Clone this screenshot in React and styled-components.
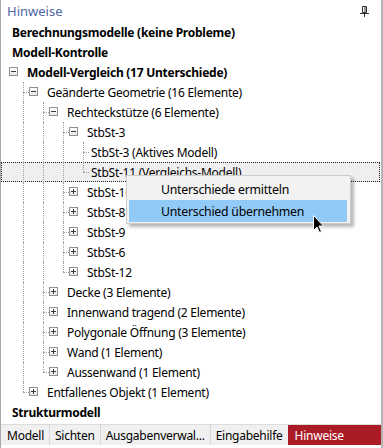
import styled, { createGlobalStyle } from "styled-components";

const GlobalStyle = createGlobalStyle`
    html, body {
        margin: 0;
        padding: 0;
        background: #ffffff;
    }
    body {
        font-family: "Noto Sans", "Open Sans", sans-serif;
        font-size: 12px;
        letter-spacing: -0.25px;
        color: #000;
    }
`;

const StyledPanel = styled.div`
    position: relative;
    width: 383px;
    height: 448px;
    box-sizing: border-box;
    border-left: 1px solid #a9a9a9;
    border-right: 2px solid #b4b4b4;
    background: #ffffff;
    display: flex;
    flex-direction: column;
    overflow: hidden;
`;

const StyledHeader = styled.div`
    height: 23px;
    display: flex;
    align-items: center;
    justify-content: space-between;
    padding: 0 12px 0 6px;
    font-size: 13px;
    letter-spacing: 0;
    color: #4e67a3;
`;

const StyledTree = styled.div`
    flex: 1;
    display: flex;
    flex-direction: column;
`;

const StyledRow = styled.div`
    position: relative;
    height: 20px;
    display: flex;
    align-items: center;
    box-sizing: border-box;
    padding-left: ${(p) => p.$textLeft}px;
    font-weight: ${(p) => (p.$bold ? 700 : 400)};
    background: ${(p) => (p.$selected ? "#efefef" : "transparent")};
    border: 1px dotted ${(p) => (p.$selected ? "#222" : "transparent")};
    margin-right: 1px;
    white-space: nowrap;
`;

const StyledGuide = styled.span`
    position: absolute;
    left: ${(p) => p.$x - 1}px;
    top: -1px;
    height: ${(p) => (p.$half ? "10px" : "20px")};
    border-left: 1px dotted #a0a0a0;
`;

const StyledStub = styled.span`
    position: absolute;
    left: ${(p) => p.$x - 1}px;
    top: 9px;
    width: 6px;
    border-top: 1px dotted #a0a0a0;
`;

const StyledBox = styled.span`
    position: absolute;
    left: ${(p) => p.$x - 1}px;
    top: 4px;
    width: 9px;
    height: 9px;
    box-sizing: border-box;
    border: 1px solid #919191;
    background: linear-gradient(#ffffff, #e9e9e9);

    &::before {
        content: "";
        position: absolute;
        left: 1px;
        top: 3px;
        width: 5px;
        height: 1px;
        background: #3a3a3a;
    }
    &::after {
        content: "";
        position: absolute;
        left: 3px;
        top: 1px;
        width: 1px;
        height: 5px;
        background: #3a3a3a;
        display: ${(p) => (p.$open ? "none" : "block")};
    }
`;

const StyledMenu = styled.div`
    position: absolute;
    left: 125px;
    top: 175px;
    width: 225px;
    box-sizing: border-box;
    padding: 2px 3px 1px 2px;
    background: #f2f2f2;
    border: 1px solid #cccccc;
    box-shadow: 3px 3px 3px rgba(0, 0, 0, 0.28);
    display: flex;
    flex-direction: column;
`;

const StyledMenuItem = styled.div`
    height: 22px;
    display: flex;
    align-items: center;
    padding-left: 32px;
    background: ${(p) => (p.$active ? "#91c9f7" : "transparent")};
    font-size: 12.3px;
`;

const StyledCursor = styled.svg`
    position: absolute;
    left: 312px;
    top: 215px;
`;

const StyledTabBar = styled.div`
    height: 20px;
    margin-top: 2px;
    margin-bottom: 3px;
    display: flex;
    align-items: stretch;
    background: #f0f0f0;
    border-top: 1px solid #dcdcdc;
`;

const StyledTab = styled.div`
    display: flex;
    align-items: center;
    padding: 0 ${(p) => (p.$active ? 6 : 5)}px;
    color: ${(p) => (p.$active ? "#ffffff" : "#000")};
    background: ${(p) => (p.$active ? "#aa1b25" : "transparent")};
    border-left: 1px solid ${(p) => (p.$first || p.$active ? "transparent" : "#d6d6d6")};
    flex: ${(p) => (p.$active ? 1 : "none")};
`;

const rows = [
    { level: 0, text: "Berechnungsmodelle (keine Probleme)", bold: true },
    { level: 0, text: "Modell-Kontrolle", bold: true },
    { level: 0, text: "Modell-Vergleich (17 Unterschiede)", bold: true, box: "open" },
    { level: 1, text: "Geänderte Geometrie (16 Elemente)", box: "open" },
    { level: 2, text: "Rechteckstütze (6 Elemente)", box: "open" },
    { level: 3, text: "StbSt-3", box: "open" },
    { level: 4, text: "StbSt-3 (Aktives Modell)" },
    { level: 4, text: "StbSt-11 (Vergleichs-Modell)", selected: true },
    { level: 3, text: "StbSt-10", box: "closed" },
    { level: 3, text: "StbSt-8", box: "closed" },
    { level: 3, text: "StbSt-9", box: "closed" },
    { level: 3, text: "StbSt-6", box: "closed" },
    { level: 3, text: "StbSt-12", box: "closed" },
    { level: 2, text: "Decke (3 Elemente)", box: "closed" },
    { level: 2, text: "Innenwand tragend (2 Elemente)", box: "closed" },
    { level: 2, text: "Polygonale Öffnung (3 Elemente)", box: "closed" },
    { level: 2, text: "Wand (1 Element)", box: "closed" },
    { level: 2, text: "Aussenwand (1 Element)", box: "closed" },
    { level: 1, text: "Entfallenes Objekt (1 Element)", box: "closed" },
    { level: 0, text: "Strukturmodell", bold: true },
];

// gibt es weiter unten noch einen Knoten auf dieser Ebene (vor einem Elternwechsel)?
const hasNextAt = (i, level) => {
    for (let j = i + 1; j < rows.length; j++) {
        if (rows[j].level < level) return false;
        if (rows[j].level === level) return true;
    }
    return false;
};

const tabs = ["Modell", "Sichten", "Ausgabenverwal...", "Eingabehilfe", "Hinweise"];

const TreeRow = ({ row, index }) => {
    const { level, box } = row;
    let textLeft = 10;
    if (level === 0 && box) textLeft = 25;
    if (level > 0) textLeft = box ? 25 + 20 * level : 9 + 20 * level;

    const guides = [];
    for (let k = 1; k < level; k++) {
        if (hasNextAt(index, k)) guides.push(<StyledGuide key={k} $x={2 + 20 * k} />);
    }

    return (
        <StyledRow $textLeft={textLeft} $bold={row.bold} $selected={row.selected}>
            {guides}
            {level > 0 && (
                <>
                    <StyledGuide $x={2 + 20 * level} $half={!hasNextAt(index, level)} />
                    <StyledStub $x={2 + 20 * level} />
                </>
            )}
            {box && <StyledBox $x={8 + 20 * level} $open={box === "open"} />}
            {row.text}
        </StyledRow>
    );
};

const App = () => {
    return (
        <>
            <GlobalStyle />
            <StyledPanel>
                <StyledHeader>
                    <span>Hinweise</span>
                    <svg width="9" height="11" viewBox="0 0 9 11">
                        <path d="M2.5 0.5h4v6h-4z" fill="none" stroke="#333" />
                        <path d="M5 1v5.5" stroke="#333" />
                        <path d="M0 7.5h9" stroke="#333" />
                        <path d="M4.5 8v3" stroke="#333" />
                    </svg>
                </StyledHeader>
                <StyledTree>
                    {rows.map((r, i) => (
                        <TreeRow key={i} row={r} index={i} />
                    ))}
                </StyledTree>
                <StyledTabBar>
                    {tabs.map((t, i) => (
                        <StyledTab key={t} $first={i === 0} $active={t === "Hinweise"}>
                            {t}
                        </StyledTab>
                    ))}
                </StyledTabBar>

                <StyledMenu>
                    <StyledMenuItem>Unterschiede ermitteln</StyledMenuItem>
                    <StyledMenuItem $active>Unterschied übernehmen</StyledMenuItem>
                </StyledMenu>
                <StyledCursor width="12" height="19" viewBox="0 0 12 19">
                    <path
                        d="M0.5 0.5 L0.5 15.5 L4 12 L6.5 17.5 L8.5 16.5 L6 11 L10.5 11 Z"
                        fill="#000"
                        stroke="#fff"
                        strokeWidth="1"
                    />
                </StyledCursor>
            </StyledPanel>
        </>
    );
};

export default App;
